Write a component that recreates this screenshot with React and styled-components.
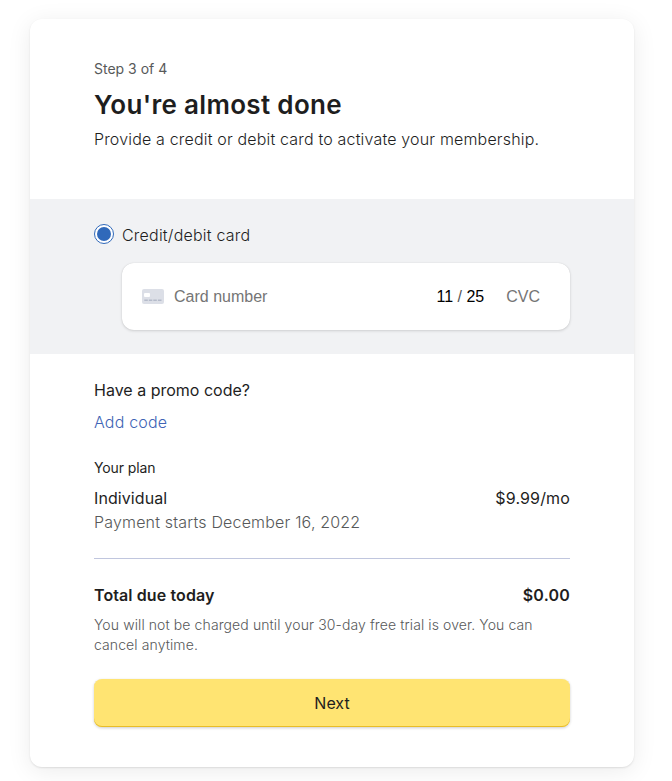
import React from 'react';
import styled, { createGlobalStyle } from 'styled-components';

const GlobalStyle = createGlobalStyle`
  * {
    box-sizing: border-box;
  }

  body {
    margin: 0;
    background-color: #fff;
    font-family: Inter, 'Liberation Sans', sans-serif;
    overflow: hidden;
  }
`;

const Page = styled.main`
  padding: 19px 38px 0 30px;
  height: 781px;
`;

const Card = styled.section`
  height: 748px;
  padding-top: 40px;
  background-color: #fff;
  border-radius: 12px;
  box-shadow: 0 1px 2px rgba(0, 0, 0, 0.1), 0 4px 24px rgba(0, 0, 0, 0.08);
`;

const Header = styled.header`
  height: 140px;
  padding: 0 64px;
`;

const Text = styled.p`
  margin: 0;
  color: ${({ $muted }) => ($muted ? '#57595a' : '#1e1e1e')};
  font-size: ${({ $small }) => ($small ? '14px' : '16px')};
  line-height: ${({ $small }) => ($small ? '20px' : '24px')};
  font-weight: ${({ $weight }) => $weight || 400};
  letter-spacing: ${({ $spacing }) => $spacing || 0};
`;

const Title = styled.h1`
  margin: 8px 0 4px;
  color: #1e1e1e;
  font-size: 26px;
  line-height: 36px;
  font-weight: 600;
  letter-spacing: 0.32px;
`;

const PaymentSection = styled.div`
  height: 155px;
  padding: 24px 64px;
  background-color: #f1f2f4;
`;

const RadioLabel = styled.label`
  display: flex;
  gap: 8px;
`;

const Radio = styled.span`
  width: 20px;
  height: 20px;
  margin-top: 1px;
  padding: 2px;
  border: 1px solid #3069ba;
  border-radius: 50%;
  background-color: #fff;

  &::after {
    content: '';
    display: block;
    width: 14px;
    height: 14px;
    border-radius: 50%;
    background-color: #3069ba;
  }
`;

const CardField = styled.div`
  display: flex;
  align-items: center;
  height: 67px;
  margin: 16px 0 0 28px;
  padding: 0 30px 0 20px;
  border-radius: 12px;
  background-color: #fff;
  box-shadow: 0 0 1px rgba(0, 0, 0, 0.14), 0 1px 3px rgba(0, 0, 0, 0.14);
  color: #757575;
  font-family: 'Liberation Sans', Arial, sans-serif;
  font-size: 16px;
  line-height: 20px;
`;

const CardNumber = styled.span`
  flex: 1;
  margin-left: 10px;
`;

const Expiry = styled.span`
  margin-right: 22px;
  color: #000;
`;

const Slash = styled.span`
  color: #555;
`;

const Details = styled.div`
  padding: 24px 64px 0;
`;

const CodeLink = styled.a`
  display: block;
  margin: 8px 0 24px;
  color: #4064b5;
  font-size: 16px;
  line-height: 24px;
  font-weight: 300;
  letter-spacing: 0.17px;
`;

const Plan = styled.div`
  margin-top: 8px;
  padding-bottom: 24px;
  border-bottom: 1px solid #c0c6de;
`;

const Row = styled.div`
  display: flex;
  justify-content: space-between;
`;

const Total = styled.div`
  display: flex;
  flex-direction: column;
  gap: 8px;
  padding: 24px 0;
`;

const NextButton = styled.button`
  display: block;
  width: 100%;
  height: 48px;
  padding: 0;
  border: 0;
  border-radius: 8px;
  background-color: #ffe472;
  box-shadow: inset 0 -1px 0 #e8bd27, 0 1px 3px rgba(0, 0, 0, 0.2);
  color: #1e1e1e;
  font: 400 16px/24px Inter, sans-serif;
`;

const CardIcon = () => (
  <svg width="22" height="15" viewBox="0 0 22 15">
    <rect width="22" height="15" rx="2" fill="#dcdfe7" />
    <rect x="2" y="4" width="6" height="4" rx="1" fill="#fff" />
    <path d="M2.3 11.3h3.5M6.8 11.3h3.5M11.3 11.3h3.5M15.9 11.3h3.6" stroke="#b5bbca" strokeWidth="1.4" />
  </svg>
);

const App = () => {
  return (
    <>
      <GlobalStyle />
      <Page>
        <Card>
          <Header>
            <Text $small $muted>Step 3 of 4</Text>
            <Title>You're almost done</Title>
            <Text $weight={300} $spacing="0.17px">
              Provide a credit or debit card to activate your membership.
            </Text>
          </Header>
          <PaymentSection>
            <RadioLabel>
              <Radio />
              <Text as="span" $weight={300} $spacing="0.22px">Credit/debit card</Text>
            </RadioLabel>
            <CardField>
              <CardIcon />
              <CardNumber>Card number</CardNumber>
              <Expiry>11 <Slash>/</Slash> 25</Expiry>
              <span>CVC</span>
            </CardField>
          </PaymentSection>
          <Details>
            <Text>Have a promo code?</Text>
            <CodeLink>Add code</CodeLink>
            <Text $small $spacing="-0.1px">Your plan</Text>
            <Plan>
              <Row>
                <Text $spacing="0.08px">Individual</Text>
                <Text $spacing="0.15px">$9.99/mo</Text>
              </Row>
              <Text $muted $weight={300} $spacing="0.18px">Payment starts December 16, 2022</Text>
            </Plan>
            <Total>
              <Row>
                <Text $weight={600} $spacing="0.1px">Total due today</Text>
                <Text $weight={600} $spacing="0.2px">$0.00</Text>
              </Row>
              <Text $small $muted $weight={300} $spacing="0.1px">
                You will not be charged until your 30-day free trial is over. You can cancel anytime.
              </Text>
            </Total>
            <NextButton>Next</NextButton>
          </Details>
        </Card>
      </Page>
    </>
  );
};

export default App;
